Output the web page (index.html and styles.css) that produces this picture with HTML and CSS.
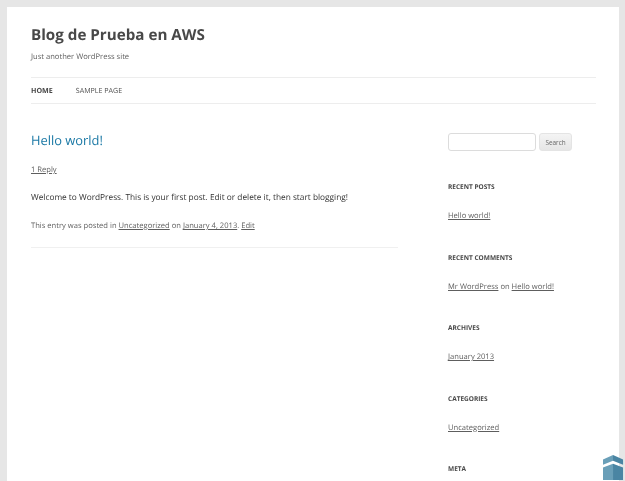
FILE: index.html
```html
<!DOCTYPE html>
<html lang="en">
<head>
<meta charset="utf-8">
<title>Blog de Prueba en AWS</title>
<link rel="stylesheet" href="styles.css">
</head>
<body>
<div class="page">
  <header class="site-header">
    <h1 class="site-title">Blog de Prueba en AWS</h1>
    <p class="site-desc">Just another WordPress site</p>
    <nav class="nav">
      <a class="nav-item current" href="#">HOME</a>
      <a class="nav-item" href="#">SAMPLE PAGE</a>
    </nav>
  </header>
  <div class="columns">
    <main class="content">
      <h2 class="entry-title">Hello world!</h2>
      <p class="reply"><a href="#">1 Reply</a></p>
      <p class="entry-text">Welcome to WordPress. This is your first post. Edit or delete it, then start blogging!</p>
      <p class="entry-meta">This entry was posted in <a href="#">Uncategorized</a> on <a href="#">January 4, 2013</a>. <a href="#">Edit</a></p>
    </main>
    <aside class="sidebar">
      <form class="search">
        <input class="search-input" type="text" aria-label="Search">
        <button class="search-btn" type="button">Search</button>
      </form>
      <section class="widget">
        <h3 class="widget-title">RECENT POSTS</h3>
        <p class="widget-text"><a href="#">Hello world!</a></p>
      </section>
      <section class="widget">
        <h3 class="widget-title">RECENT COMMENTS</h3>
        <p class="widget-text"><a href="#">Mr WordPress</a> on <a href="#">Hello world!</a></p>
      </section>
      <section class="widget">
        <h3 class="widget-title">ARCHIVES</h3>
        <p class="widget-text"><a href="#">January 2013</a></p>
      </section>
      <section class="widget">
        <h3 class="widget-title">CATEGORIES</h3>
        <p class="widget-text"><a href="#">Uncategorized</a></p>
      </section>
      <section class="widget">
        <h3 class="widget-title">META</h3>
      </section>
    </aside>
  </div>
</div>
<svg class="badge" width="21" height="25" viewBox="0 0 22 26" aria-hidden="true">
  <path d="M0 4.5 L10.5 0 V6 L0 10 Z" fill="#6a9fb8"/>
  <path d="M10.5 0 L21 4.5 V10 L10.5 6 Z" fill="#4a85a3"/>
  <path d="M0 13 L10.5 9 V26 H0 Z" fill="#6a9fb8"/>
  <path d="M10.5 9 L21 13 V26 H10.5 Z" fill="#4a85a3"/>
</svg>
</body>
</html>
```
FILE: styles.css
```css
html, body {
  margin: 0;
  height: 100%;
  overflow: hidden;
}
body {
  background: #e6e6e6;
  font-family: "Open Sans", "Liberation Sans", sans-serif;
  text-rendering: geometricPrecision;
  color: #444;
  padding: 7px 6px 0 7px;
  box-sizing: border-box;
}
a {
  color: inherit;
}
p, h1, h2, h3 {
  margin: 0;
}
.page {
  background: #fff;
  padding: 0 23px 0 24px;
  height: 600px;
  filter: blur(0.3px);
}
.site-header {
  padding-top: 17px;
}
.site-title {
  font-size: 15.2px;
  line-height: 22px;
  font-weight: 700;
  color: #484848;
}
.site-desc {
  margin-top: 5px;
  font-size: 7.6px;
  line-height: 12px;
  color: #5e5e5e;
}
.nav {
  display: flex;
  gap: 23px;
  margin-top: 14px;
  height: 25px;
  align-items: center;
  border-top: 1px solid #ededed;
  border-bottom: 1px solid #ededed;
}
.nav-item {
  font-size: 7.1px;
  line-height: 12px;
  color: #505050;
  text-decoration: none;
}
.nav-item.current {
  font-weight: 700;
  color: #484848;
}
.columns {
  display: flex;
  justify-content: space-between;
}
.content {
  box-sizing: border-box;
  width: 367px;
  height: 144px;
  padding-top: 26px;
  border-bottom: 1px solid #f0f0f0;
}
.entry-title {
  font-size: 12.9px;
  line-height: 20px;
  font-weight: 400;
  color: #1a78a5;
}
.reply {
  margin-top: 13px;
  font-size: 7.6px;
  line-height: 14px;
  color: #5e5e5e;
}
.entry-text {
  margin-top: 13px;
  font-size: 8.3px;
  line-height: 15px;
  color: #333;
}
.entry-meta {
  margin-top: 14px;
  font-size: 7.6px;
  line-height: 14px;
  color: #5e5e5e;
}
.sidebar {
  width: 148px;
  padding-top: 29px;
}
.search {
  display: flex;
  gap: 3px;
}
.search-input {
  box-sizing: border-box;
  width: 88px;
  height: 18px;
  padding: 0 4px;
  border: 1px solid #dcdcdc;
  border-radius: 3px;
  background: #fff;
}
.search-btn {
  box-sizing: border-box;
  width: 33px;
  height: 18px;
  padding: 0;
  font: 6.4px "Open Sans", sans-serif;
  color: #666;
  border: 1px solid #e4e4e4;
  border-radius: 3px;
  background: linear-gradient(#f4f4f4, #e6e6e6);
}
.widget {
  height: 70.5px;
}
.search + .widget {
  margin-top: 30px;
}
.widget-title {
  font-size: 6.5px;
  line-height: 11px;
  font-weight: 700;
  color: #484848;
}
.widget-text {
  margin-top: 17px;
  font-size: 7.6px;
  line-height: 14px;
  color: #5e5e5e;
}
.badge {
  position: fixed;
  right: 1px;
  bottom: 1px;
}
```
